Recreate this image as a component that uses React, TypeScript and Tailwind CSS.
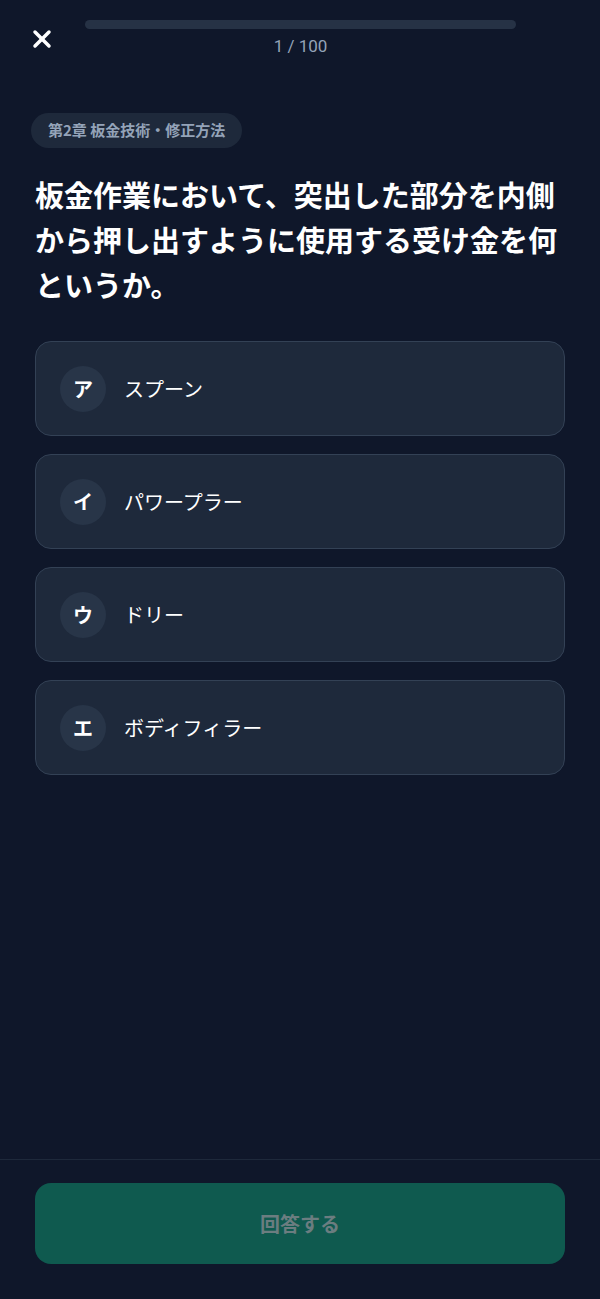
import { X } from "lucide-react";

const choices = [
  { key: "ア", label: "スプーン" },
  { key: "イ", label: "パワープラー" },
  { key: "ウ", label: "ドリー" },
  { key: "エ", label: "ボディフィラー" },
];

export default function App() {
  return (
    <div
      className="h-[1299px] w-[600px] bg-[#0f172a] text-white flex flex-col"
      style={{ fontFamily: '"Noto Sans CJK JP", "Noto Sans", sans-serif' }}
    >
      <header className="flex items-start px-[28px] pt-[20px]">
        <button className="w-[28px] h-[28px] mt-[5px] flex items-center justify-center">
          <X className="h-[30px] w-[30px] text-white" strokeWidth={3} />
        </button>
        <div className="flex-1 flex flex-col items-center ml-[29px] mr-[56px]">
          <div className="h-[9px] w-full rounded-full bg-[#263245]" />
          <span
            className="mt-[4px] text-[17px] leading-[26px] text-[#94a3b8]"
            style={{ fontFamily: 'Roboto, "Noto Sans", sans-serif' }}
          >
            1 / 100
          </span>
        </div>
      </header>

      <main className="flex-1 px-[35px] pt-[54px]">
        <span className="inline-flex items-center h-[35px] px-[17px] -ml-[4px] rounded-full bg-[#1e293b] text-[15px] font-bold text-[#94a3b8]">
          第2章 板金技術・修正方法
        </span>
        <h1 className="mt-[24px] text-[29px] leading-[45px] font-bold">
          板金作業において、突出した部分を内側
          <br />
          から押し出すように使用する受け金を何
          <br />
          というか。
        </h1>

        <div className="mt-[34px] flex flex-col gap-[18px]">
          {choices.map((c) => (
            <button
              key={c.key}
              className="h-[95px] flex items-center gap-[18px] px-[24px] rounded-[16px] border border-[#334155] bg-[#1e293b] text-left"
            >
              <span className="w-[46px] h-[46px] rounded-full bg-[#283548] flex items-center justify-center text-[20px] font-bold">
                {c.key}
              </span>
              <span className="text-[20px]">{c.label}</span>
            </button>
          ))}
        </div>
      </main>

      <footer className="border-t border-[#1e293b] px-[35px] pt-[23px] pb-[35px]">
        <button className="w-full h-[81px] rounded-[16px] bg-[#0f5a4f] text-[20px] font-bold text-[#6b7d80]">
          回答する
        </button>
      </footer>
    </div>
  );
}
